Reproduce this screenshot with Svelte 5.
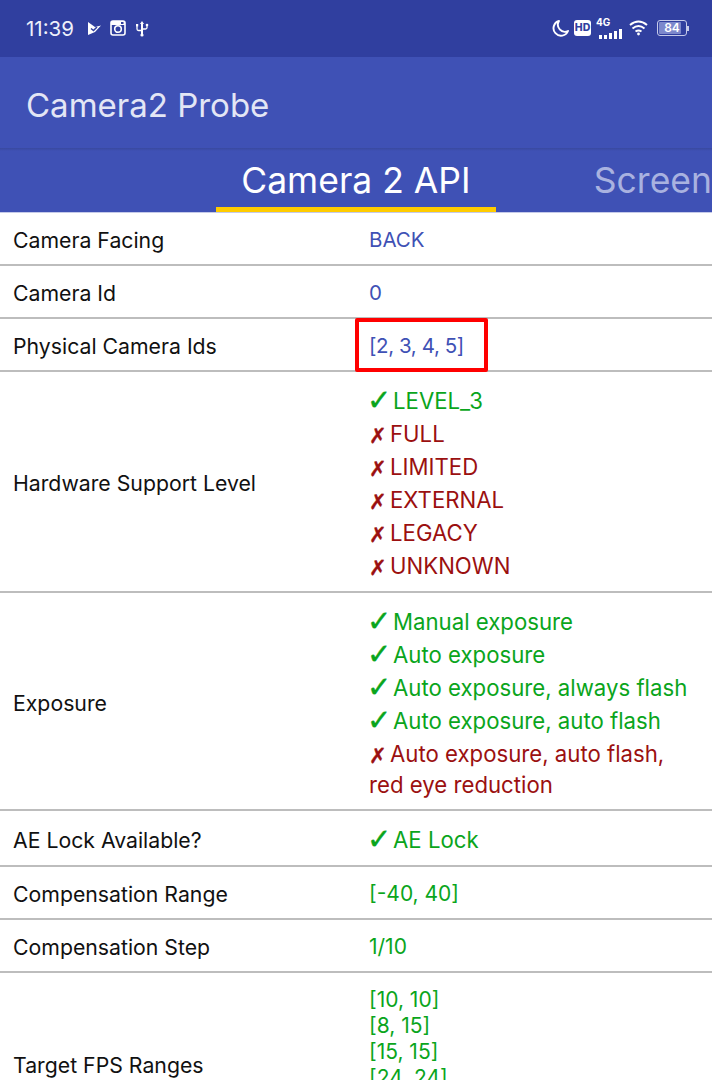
<script>
	const ok = (text) => ({ mark: 'ok', text });
	const no = (text) => ({ mark: 'no', text });

	const rows = [
		{ label: 'Camera Facing', tone: 'blue', lines: ['BACK'] },
		{ label: 'Camera Id', tone: 'blue', lines: ['0'] },
		{ label: 'Physical Camera Ids', tone: 'blue', lines: ['[2, 3, 4, 5]'], flagged: true },
		{
			label: 'Hardware Support Level',
			checks: [ok('LEVEL_3'), no('FULL'), no('LIMITED'), no('EXTERNAL'), no('LEGACY'), no('UNKNOWN')]
		},
		{
			label: 'Exposure',
			checks: [
				ok('Manual exposure'),
				ok('Auto exposure'),
				ok('Auto exposure, always flash'),
				ok('Auto exposure, auto flash'),
				no('Auto exposure, auto flash,')
			],
			wrapped: 'red eye reduction'
		},
		{ label: 'AE Lock Available?', checks: [ok('AE Lock')] },
		{ label: 'Compensation Range', tone: 'green', lines: ['[-40, 40]'] },
		{ label: 'Compensation Step', tone: 'green', lines: ['1/10'] },
		{
			label: 'Target FPS Ranges',
			tone: 'green',
			lines: ['[10, 10]', '[8, 15]', '[15, 15]', '[24, 24]', '[8, 30]', '[30, 30]']
		}
	];
</script>

<div class="screen">
	<header class="status">
		<div class="status-left">
			<span class="time">11:39</span>
			<svg class="play" width="15" height="15" viewBox="0 0 15 15">
				<path d="M1 1 L8 6 L14 4.500 L8 11 L1 14 Z" fill="#fff" />
				<path d="M4 7.500 L6.500 9.500 L10 6" fill="none" stroke="#303f9f" stroke-width="1.500" />
			</svg>
			<svg class="insta" width="16" height="16" viewBox="0 0 16 16">
				<rect x="1" y="1" width="14" height="14" rx="2" fill="none" stroke="#fff" stroke-width="1.600" />
				<rect x="1" y="1" width="14" height="4" fill="#fff" />
				<circle cx="8" cy="9" r="3.300" fill="#303f9f" stroke="#fff" stroke-width="1.600" />
				<rect x="11" y="2" width="2.500" height="2" fill="#303f9f" />
			</svg>
			<svg class="usb" width="14" height="17" viewBox="0 0 14 17">
				<path d="M7 1 L9 4 H8 V14.500 H6 V4 H5 Z" fill="#fff" />
				<circle cx="7" cy="15" r="1.600" fill="#fff" />
				<path d="M2 6 V9 Q2 10.500 3.500 10.500 H7 M12 6 V7.500 Q12 9 10.500 9 H7" fill="none" stroke="#fff" stroke-width="1.300" />
				<rect x="1" y="4" width="2.200" height="2.400" fill="#fff" />
				<circle cx="12" cy="5" r="1.300" fill="#fff" />
			</svg>
		</div>
		<div class="status-right">
			<svg class="moon" width="17" height="17" viewBox="0 0 17 17">
				<path d="M7 1 A7.500 7.500 0 1 0 16 11 A7 7 0 0 1 7 1 Z" fill="none" stroke="#fff" stroke-width="1.900" stroke-linejoin="round" />
			</svg>
			<span class="hd">HD</span>
			<span class="signal">
				<span class="four-g">4G</span>
				<span class="bars">
					<i style="height:4px"></i>
					<i style="height:4px"></i>
					<i style="height:6px"></i>
					<i style="height:8px"></i>
					<i style="height:10px"></i>
				</span>
			</span>
			<svg class="wifi" width="19" height="16" viewBox="0 0 19 16">
				<g fill="none" stroke="#fff" stroke-width="2">
					<path d="M1 5 Q9.500 -2 18 5" />
					<path d="M3.500 8.500 Q9.500 3.500 15.500 8.500" />
					<path d="M6.500 11.500 Q9.500 9.500 12.500 11.500" />
				</g>
				<circle cx="9.500" cy="14" r="1.400" fill="#fff" />
			</svg>
			<span class="battery">
				<span class="battery-body"><span class="battery-fill"></span><span class="battery-num">84</span></span>
				<span class="battery-tip"></span>
			</span>
		</div>
	</header>

	<div class="appbar">Camera2 Probe</div>

	<nav class="tabs">
		<div class="tab active">Camera 2 API</div>
		<div class="tab">Screen</div>
	</nav>

	<main class="table">
		{#each rows as row}
			<section class="row">
				<div class="label">{row.label}</div>
				<div class="value" class:flagged={row.flagged} class:has-plain={row.lines}>
					{#if row.checks}
						{#each row.checks as c}
							<div class="check {c.mark}"><span class="mark">{c.mark === 'ok' ? '✓' : '✗'}</span>{c.text}</div>
						{/each}
						{#if row.wrapped}
							<div class="wrapped">{row.wrapped}</div>
						{/if}
					{:else}
						{#each row.lines as line}
							<div class="plain {row.tone}">{line}</div>
						{/each}
					{/if}
				</div>
			</section>
		{/each}
	</main>
</div>

<style>
	:global(body) {
		margin: 0;
		background: #fff;
	}

	.screen {
		width: 712px;
		height: 1080px;
		overflow: hidden;
		font-family: Inter, Roboto, sans-serif;
		font-size: 21px;
		display: flex;
		flex-direction: column;
	}

	.status {
		height: 57px;
		flex: none;
		background: #303f9f;
		color: #fff;
		display: flex;
		align-items: center;
		justify-content: space-between;
		padding: 0 23px 1px 26px;
		box-sizing: border-box;
	}

	.status-left,
	.status-right {
		display: flex;
		align-items: center;
	}

	.time {
		font-size: 20.500px;
		color: #eef0fa;
	}

	.play {
		margin-left: 13px;
	}

	.insta {
		margin-left: 8px;
	}

	.usb {
		margin-left: 9px;
	}

	.hd {
		background: #fff;
		color: #303f9f;
		font-size: 10.500px;
		font-weight: 800;
		width: 17px;
		height: 16px;
		line-height: 16px;
		text-align: center;
		border-radius: 3px;
		margin-left: 5px;
	}

	.signal {
		width: 26px;
		height: 21px;
		position: relative;
		margin-left: 5px;
	}

	.four-g {
		position: absolute;
		left: 0;
		top: -2px;
		font-size: 10px;
		font-weight: 700;
	}

	.bars {
		position: absolute;
		right: 0;
		bottom: 0;
		display: flex;
		align-items: flex-end;
		gap: 2px;
	}

	.bars i {
		display: block;
		width: 3px;
		background: #fff;
	}

	.wifi {
		margin-left: 7px;
	}

	.battery {
		display: flex;
		align-items: center;
		margin-left: 9px;
	}

	.battery-body {
		position: relative;
		display: block;
		width: 28px;
		height: 14px;
		border: 1px solid #c5cae9;
		border-radius: 3px;
	}

	.battery-fill {
		position: absolute;
		left: 1px;
		top: 1px;
		bottom: 1px;
		width: 22px;
		background: #7c88cc;
		border-radius: 1px;
	}

	.battery-num {
		position: absolute;
		inset: 0;
		text-align: center;
		font-size: 12px;
		line-height: 14px;
		font-weight: 600;
	}

	.battery-tip {
		width: 2px;
		height: 5px;
		background: #c5cae9;
	}

	.appbar {
		height: 91px;
		flex: none;
		background: #3f51b5;
		color: #e3e6f5;
		font-size: 33px;
		line-height: 96px;
		padding-left: 26px;
		box-sizing: border-box;
	}

	.tabs {
		height: 65px;
		flex: none;
		background: linear-gradient(#39499f, #3f51b5 3px);
		border-bottom: 1px solid #c5cae9;
		box-sizing: border-box;
		display: flex;
		padding-left: 216px;
	}

	.tab {
		font-size: 35.500px;
		color: #a9b2e0;
		padding: 11px 0 0;
		white-space: nowrap;
	}

	.tab.active {
		width: 280px;
		text-align: center;
		color: #fff;
		border-bottom: 5px solid #ffcc00;
		box-sizing: border-box;
		margin-right: 98px;
	}

	.table {
		flex: 1;
		min-height: 0;
	}

	.row {
		display: grid;
		grid-template-columns: 369px 1fr;
		align-items: center;
		border-bottom: 2px solid #bdbdbd;
		box-sizing: border-box;
		background: #fff;
	}

	.label {
		color: #111;
		font-size: 21.250px;
		padding: 3px 0 0 13px;
	}

	.value {
		position: relative;
		padding: 12px 20px 9px 0;
	}

	.value.has-plain {
		padding-top: 14px;
		padding-bottom: 11px;
	}

	.plain {
		line-height: 26px;
	}

	.blue {
		color: #3f51b5;
		font-size: 20.500px;
	}

	.flagged .blue {
		letter-spacing: -0.4px;
	}

	.green {
		color: #0aa51c;
	}

	.check {
		font-size: 22.200px;
		line-height: 33px;
		height: 33px;
		white-space: nowrap;
	}

	.check.ok {
		color: #0aa51c;
	}

	.check.no,
	.wrapped {
		color: #9b1010;
	}

	.wrapped {
		font-size: 22.200px;
		line-height: 30px;
	}

	.mark {
		display: inline-block;
		font-family: 'DejaVu Sans', sans-serif;
		font-weight: 700;
		line-height: 1;
		position: relative;
		top: 1px;
	}

	.check.ok .mark {
		width: 26px;
		margin-left: -2px;
		font-size: 29px;
		-webkit-text-stroke: 0.4px currentColor;
	}

	.check.no .mark {
		width: 21px;
		font-size: 21px;
		-webkit-text-stroke: 0.4px currentColor;
	}

	.flagged::after {
		content: '';
		position: absolute;
		left: -14px;
		top: -1px;
		width: 133px;
		height: 54px;
		border: 4px solid #f00;
		border-radius: 2px;
		box-sizing: border-box;
	}
</style>
